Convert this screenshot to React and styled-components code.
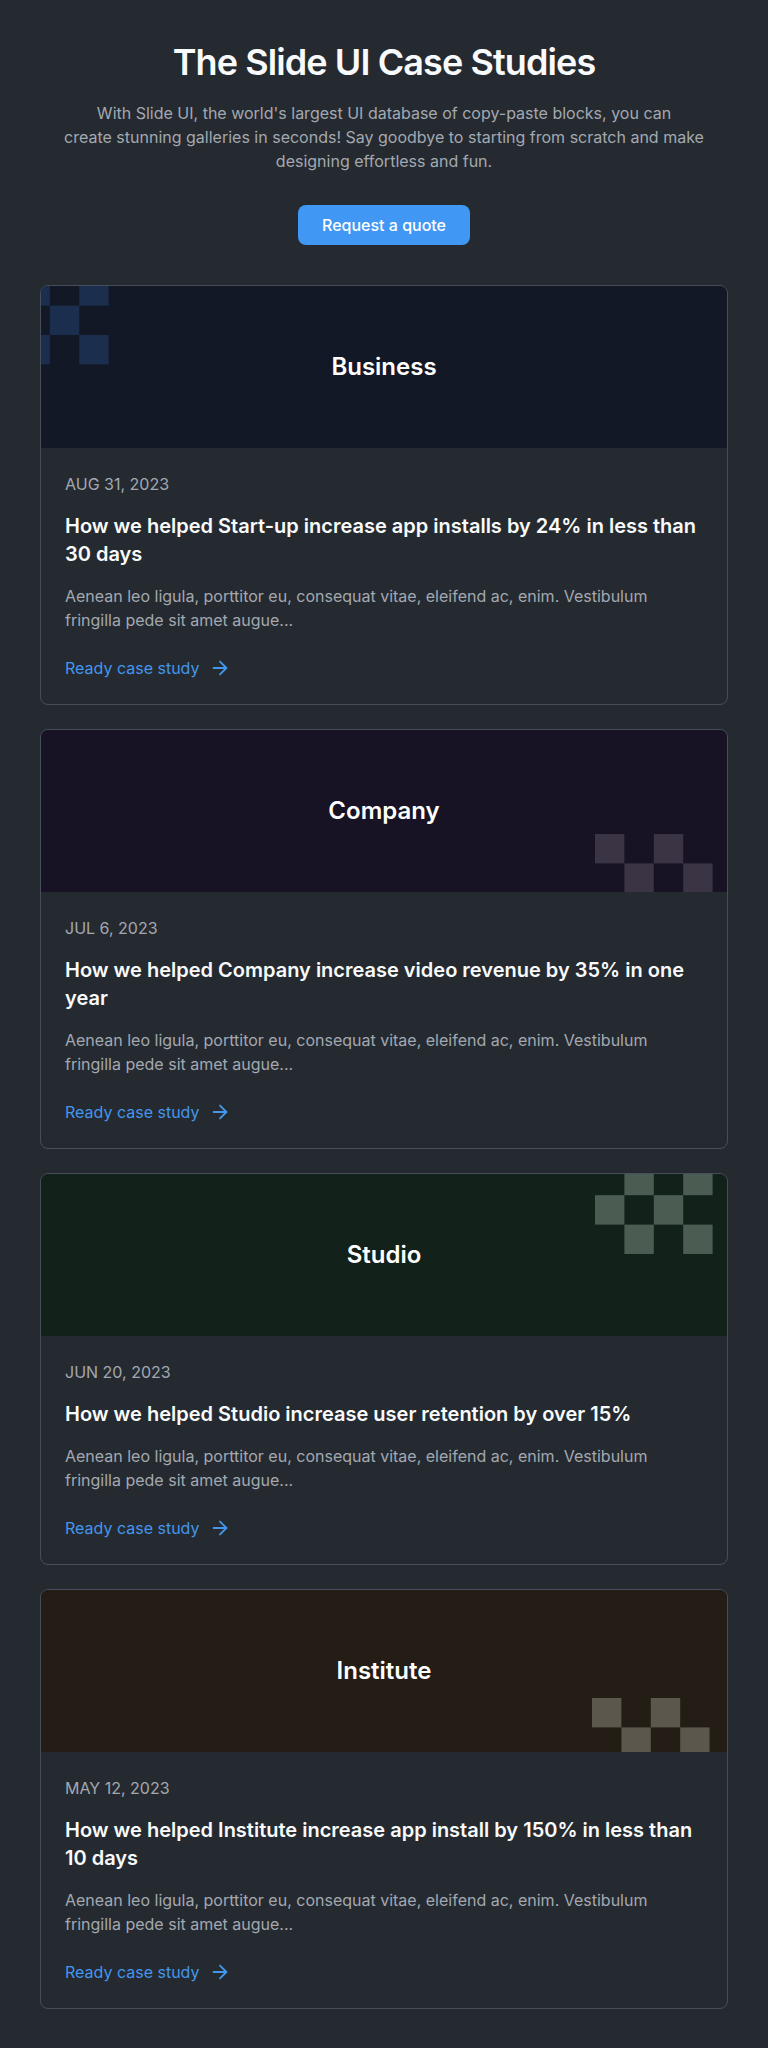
import React from "react";
import styled, { createGlobalStyle } from "styled-components";
import { ArrowRight } from "lucide-react";

const GlobalStyle = createGlobalStyle`
  * { box-sizing: border-box; }
  html, body {
    margin: 0;
    padding: 0;
    background: #252a31;
    font-family: Inter, "Noto Sans", "Liberation Sans", sans-serif;
    -webkit-font-smoothing: antialiased;
  }
`;

const Page = styled.main`
  padding: 40px 40px 40px;
  background: #252a31;
  min-height: 2048px;
`;

const Hero = styled.header`
  display: flex;
  flex-direction: column;
  align-items: center;
  text-align: center;
`;

const Title = styled.h1`
  margin: 0;
  font-size: 36px;
  line-height: 44px;
  font-weight: 600;
  letter-spacing: -0.9px;
  color: #f9fafb;
`;

const Lead = styled.p`
  margin: 17px 0 0;
  max-width: 680px;
  font-size: 16px;
  line-height: 24px;
  color: #a3a8b0;
`;

const QuoteButton = styled.button`
  margin-top: 32px;
  height: 40px;
  padding: 0 24px;
  border: none;
  border-radius: 8px;
  background: #4098f4;
  color: #ffffff;
  font-family: inherit;
  font-size: 16px;
  font-weight: 500;
  cursor: pointer;
`;

const CardList = styled.section`
  margin-top: 40px;
  display: flex;
  flex-direction: column;
  gap: 24px;
`;

const Card = styled.article`
  border: 1px solid #464e5a;
  border-radius: 8px;
  overflow: hidden;
  display: flex;
  flex-direction: column;
`;

const Cover = styled.div`
  position: relative;
  height: 162px;
  background: ${(p) => p.$bg};
  display: flex;
  align-items: center;
  justify-content: center;
  overflow: hidden;
`;

const Pattern = styled.svg`
  position: absolute;
  top: 0;
  left: 0;
  pointer-events: none;
`;

const CoverLabel = styled.h2`
  position: relative;
  margin: 0;
  font-size: 24px;
  line-height: 32px;
  font-weight: 600;
  color: #ffffff;
`;

const Body = styled.div`
  padding: 24px 24px 24px;
  display: flex;
  flex-direction: column;
  align-items: flex-start;
`;

const Date = styled.time`
  font-size: 16px;
  line-height: 24px;
  color: #a3a8b0;
`;

const CardTitle = styled.h3`
  margin: 16px 0 0;
  font-size: 20px;
  line-height: 28px;
  font-weight: 600;
  color: #f9fafb;
`;

const Excerpt = styled.p`
  margin: 16px 0 0;
  font-size: 16px;
  line-height: 24px;
  color: #a3a8b0;
`;

const ReadLink = styled.a`
  margin-top: 24px;
  display: inline-flex;
  align-items: center;
  gap: 10px;
  font-size: 16px;
  line-height: 24px;
  color: #4396ec;
  text-decoration: none;
`;

const S = 29.4;

const cases = [
  {
    tag: "Business",
    bg: "#131826",
    sq: "#1c2e4e",
    squares: [
      [-20.6, -9.8],
      [38.2, -9.8],
      [8.8, 19.6],
      [-20.6, 49],
      [38.2, 49],
    ],
    date: "AUG 31, 2023",
    title: "How we helped Start-up increase app installs by 24% in less than 30 days",
  },
  {
    tag: "Company",
    bg: "#171324",
    sq: "#3a3445",
    squares: [
      [554, 104],
      [612.8, 104],
      [583.4, 133.4],
      [642.2, 133.4],
    ],
    date: "JUL 6, 2023",
    title: "How we helped Company increase video revenue by 35% in one year",
  },
  {
    tag: "Studio",
    bg: "#12211a",
    sq: "#4b5d53",
    squares: [
      [583.4, -8.2],
      [642.2, -8.2],
      [554, 21.2],
      [612.8, 21.2],
      [583.4, 50.6],
      [642.2, 50.6],
    ],
    date: "JUN 20, 2023",
    title: "How we helped Studio increase user retention by over 15%",
  },
  {
    tag: "Institute",
    bg: "#231d15",
    sq: "#5b574d",
    squares: [
      [551, 108],
      [609.8, 108],
      [580.4, 137.4],
      [639.2, 137.4],
    ],
    date: "MAY 12, 2023",
    title: "How we helped Institute increase app install by 150% in less than 10 days",
  },
];

const excerpt =
  "Aenean leo ligula, porttitor eu, consequat vitae, eleifend ac, enim. Vestibulum fringilla pede sit amet augue...";

function CaseCard({ item }) {
  return (
    <Card>
      <Cover $bg={item.bg}>
        <Pattern width="686" height="162" viewBox="0 0 686 162" aria-hidden="true">
          {item.squares.map(([x, y], i) => (
            <rect key={i} x={x} y={y} width={S} height={S} fill={item.sq} />
          ))}
        </Pattern>
        <CoverLabel>{item.tag}</CoverLabel>
      </Cover>
      <Body>
        <Date>{item.date}</Date>
        <CardTitle>{item.title}</CardTitle>
        <Excerpt>{excerpt}</Excerpt>
        <ReadLink href="#">
          Ready case study
          <ArrowRight size={22} strokeWidth={2} />
        </ReadLink>
      </Body>
    </Card>
  );
}

export default function App() {
  return (
    <>
      <GlobalStyle />
      <Page>
        <Hero>
          <Title>The Slide UI Case Studies</Title>
          <Lead>
            With Slide UI, the world's largest UI database of copy-paste blocks, you can
            <br />
            create stunning galleries in seconds! Say goodbye to starting from scratch and make
            designing effortless and fun.
          </Lead>
          <QuoteButton>Request a quote</QuoteButton>
        </Hero>
        <CardList>
          {cases.map((c) => (
            <CaseCard key={c.tag} item={c} />
          ))}
        </CardList>
      </Page>
    </>
  );
}
